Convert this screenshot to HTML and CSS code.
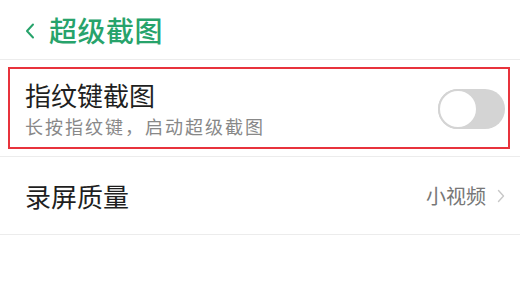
FILE: index.html
```html
<!DOCTYPE html>
<html lang="zh">
  <head>
    <meta charset="UTF-8" />
    <meta name="viewport" content="width=device-width, initial-scale=1.0" />
    <title>超级截图</title>
    <link rel="stylesheet" href="styles.css">
  </head>
  <body>
    <div class="page">
      <div class="header">
        <svg class="back" width="10" height="16" viewBox="0 0 10 16">
          <path d="M8 1.5 L2 8 L8 14.5" fill="none" stroke="#27a36b" stroke-width="2" stroke-linecap="round" stroke-linejoin="round" />
        </svg>
        <h1 class="title">超级截图</h1>
      </div>

      <div class="row row-switch">
        <div class="row-text">
          <div class="row-title">指纹键截图</div>
          <div class="row-sub">长按指纹键，启动超级截图</div>
        </div>
        <div class="toggle"><div class="knob"></div></div>
        <div class="highlight"></div>
      </div>

      <div class="row row-link">
        <div class="row-title">录屏质量</div>
        <div class="row-value">
          <span>小视频</span>
          <svg class="arrow" width="8" height="14" viewBox="0 0 8 14">
            <path d="M1.5 1.5 L6.5 7 L1.5 12.5" fill="none" stroke="#c8c8c8" stroke-width="1.4" stroke-linecap="round" stroke-linejoin="round" />
          </svg>
        </div>
      </div>
    </div>
  </body>
</html>
```

FILE: styles.css
```css
body {
  margin: 0;
  padding: 0;
  background-color: #ffffff;
  font-family: "Noto Sans CJK SC", "Noto Sans", sans-serif;
  overflow: hidden;
}

.page {
  position: relative;
  width: 520px;
  height: 297px;
}

.header {
  height: 60px;
  display: flex;
  align-items: center;
  padding-left: 25px;
  border-bottom: 1px solid #ececec;
  box-sizing: border-box;
}

.back {
  margin-top: 2px;
  margin-right: 14px;
}

.title {
  margin: 0;
  font-size: 28px;
  font-weight: 500;
  letter-spacing: 0.5px;
  color: #27a36b;
  line-height: 1;
}

.row {
  position: relative;
  display: flex;
  align-items: center;
  justify-content: space-between;
  padding: 0 15px 0 25px;
  border-bottom: 1px solid #ececec;
  box-sizing: border-box;
}

.row-switch {
  height: 97px;
}

.row-link {
  height: 78px;
}

.row-title {
  font-size: 26px;
  color: #1f1f1f;
  line-height: 1;
}

.row-sub {
  margin-top: 9px;
  font-size: 18px;
  letter-spacing: 2px;
  color: #888888;
  line-height: 1;
}

.toggle {
  width: 67px;
  height: 40px;
  border-radius: 20px;
  background-color: #d4d4d4;
  margin-top: 1px;
  position: relative;
}

.knob {
  position: absolute;
  left: 0;
  top: 0;
  width: 40px;
  height: 40px;
  border-radius: 50%;
  background-color: #ffffff;
  border: 2px solid #d4d4d4;
  box-sizing: border-box;
}

.highlight {
  position: absolute;
  left: 8px;
  top: 7px;
  width: 502px;
  height: 82px;
  border: 2.5px solid #e8333c;
  box-sizing: border-box;
  pointer-events: none;
}

.row-value {
  display: flex;
  align-items: center;
  gap: 11px;
  font-size: 20px;
  color: #777777;
}
```
